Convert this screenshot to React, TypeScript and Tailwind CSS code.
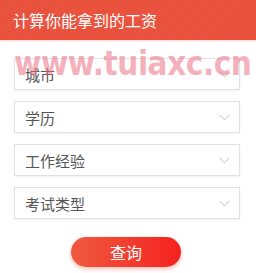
import React from "react";

const Chevron = () => (
  <svg width="11" height="7" viewBox="0 0 11 7" fill="none" className="shrink-0">
    <path d="M0.5 0.8 L5.5 5.8 L10.5 0.8" stroke="#bdbdbd" strokeWidth="1" />
  </svg>
);

const Select = ({ label }: { label: string }) => (
  <div className="flex h-[32px] items-center justify-between border border-[#e2e2e2] bg-white pl-[10px] pr-[9px] shadow-[0_1px_2px_rgba(0,0,0,0.06)]">
    <span className="text-[15px] leading-none text-[#555]">{label}</span>
    <Chevron />
  </div>
);

export default function App() {
  return (
    <div
      className="relative h-[273px] w-[256px] overflow-hidden bg-white"
      style={{ fontFamily: '"Noto Sans CJK SC", "Noto Sans", sans-serif' }}
    >
      <div className="flex h-[40px] items-center bg-[#e9503b] bg-[repeating-linear-gradient(135deg,rgba(255,255,255,0.04)_0px,rgba(255,255,255,0.04)_1px,transparent_1px,transparent_3px)] pl-[13px] shadow-[0_1px_2px_rgba(200,80,60,0.25)]">
        <span className="text-[16px] leading-none text-white">计算你能拿到的工资</span>
      </div>
      <div className="flex flex-col gap-[11px] pl-[14px] pr-[16px] pt-[18px]">
        <Select label="城市" />
        <Select label="学历" />
        <Select label="工作经验" />
        <Select label="考试类型" />
      </div>
      <div className="mt-[18px] flex justify-center pr-[4px]">
        <button className="flex h-[30px] w-[110px] items-center justify-center rounded-full bg-[linear-gradient(90deg,#ef5a40,#f5221f)] text-[16px] leading-none text-white shadow-[0_2px_4px_rgba(240,60,40,0.35)]">
          查询
        </button>
      </div>
      <div
        className="pointer-events-none absolute left-[14px] top-[46px] origin-left scale-x-[0.87] whitespace-nowrap text-[34px] font-bold leading-none tracking-[-0.5px] text-[rgba(236,110,130,0.55)]"
        style={{ fontFamily: '"DejaVu Sans", sans-serif' }}
      >
        www.tuiaxc.cn
      </div>
    </div>
  );
}
